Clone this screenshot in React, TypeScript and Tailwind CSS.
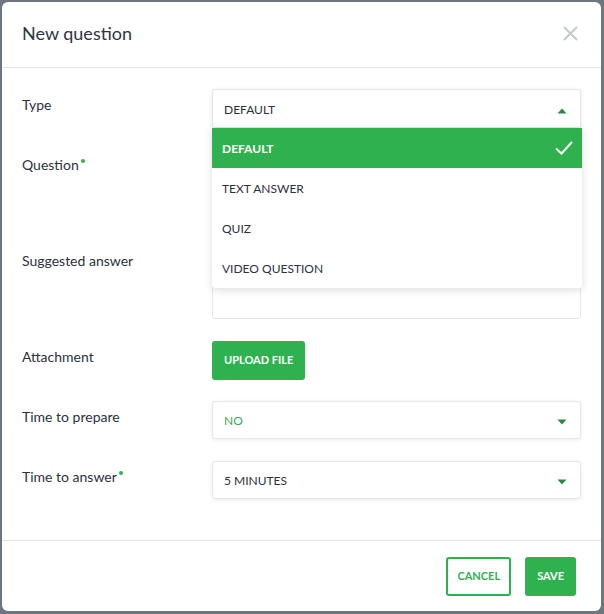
import type { ReactNode } from "react"

const green = "bg-[#30b150]"

function Caret({ up = false }: { up?: boolean }) {
  return (
    <svg className="mt-[2px]" width="10" height="6" viewBox="0 0 10 6" aria-hidden="true">
      {up ? <path d="M0.5 5.5 L5 0.5 L9.5 5.5 Z" fill="#288a40" /> : <path d="M0.5 0.5 L9.5 0.5 L5 5.5 Z" fill="#288a40" />}
    </svg>
  )
}

function Row({ label, required, children, className = "" }: { label: string; required?: boolean; children: ReactNode; className?: string }) {
  return (
    <div className={`flex ${className}`}>
      <div className="w-[190px] shrink-0 pt-[6px] text-[14px] leading-5 text-[#2b323a]">
        {label}
        {required && <span className="relative -top-[7px] ml-[2px] inline-block h-[4px] w-[4px] rounded-full bg-[#30b150]" />}
      </div>
      <div className="flex-1">{children}</div>
    </div>
  )
}

function Select({ value, green: isGreen }: { value: string; green?: boolean }) {
  return (
    <div className="flex h-[38px] items-center justify-between rounded-[3px] border border-[#e4e7ea] bg-white pl-[11px] pr-[13px] pt-[2px] shadow-[0_1px_4px_rgba(0,0,0,0.08)]">
      <span className={`text-[12px] ${isGreen ? "text-[#30b150]" : "text-[#2b323a]"}`}>{value}</span>
      <Caret />
    </div>
  )
}

export default function App() {
  return (
    <main className="min-h-screen bg-[#6e7780] pl-[2px] pt-[2px] font-['Lato',sans-serif]">
      <div className="flex h-[609px] w-[599px] flex-col rounded-[6px] bg-white">
        {/* Header */}
        <div className="flex h-[66px] shrink-0 items-start justify-between border-b border-[#e3e6e9] pl-5 pr-[23px] pt-[19px]">
          <h1 className="text-[18px] leading-6 text-[#2d3640]">New question</h1>
          <svg className="mt-[5px]" width="15" height="15" viewBox="0 0 15 15" aria-hidden="true">
            <path d="M1 1 L14 14 M14 1 L1 14" stroke="#c3c9ce" strokeWidth="2" />
          </svg>
        </div>

        {/* Body */}
        <div className="flex flex-1 flex-col px-5 pt-[21px]">
          <Row label="Type" className="relative z-10 mb-[21px]">
            <div className="relative">
              <div className="flex h-[39px] items-center justify-between rounded-[3px] border border-[#e4e7ea] bg-white pl-[11px] pr-[13px] pt-[2px] shadow-[0_1px_4px_rgba(0,0,0,0.1)]">
                <span className="text-[12px] text-[#2b323a]">DEFAULT</span>
                <Caret up />
              </div>
              <div className="absolute left-0 top-[39px] w-[370px] overflow-hidden rounded-b-[3px] bg-white shadow-[0_2px_8px_rgba(0,0,0,0.14)]">
                <div className={`flex h-[40px] items-center justify-between ${green} pl-[10px] pr-[8px] pt-[2px]`}>
                  <span className="text-[12px] font-bold text-white">DEFAULT</span>
                  <svg className="-mt-[2px]" width="20" height="16" viewBox="0 0 20 16" aria-hidden="true">
                    <path d="M2 8.5 L7.5 13.5 L18 2" stroke="#fff" strokeWidth="2" fill="none" />
                  </svg>
                </div>
                {["TEXT ANSWER", "QUIZ", "VIDEO QUESTION"].map((t) => (
                  <div key={t} className="flex h-[40px] items-center pl-[10px] pt-[2px] text-[12px] text-[#2b323a]">
                    {t}
                  </div>
                ))}
              </div>
            </div>
          </Row>

          <Row label="Question" required className="mb-[20px]">
            <div className="h-[76px] rounded-[3px] border border-[#e4e7ea]" />
          </Row>

          <Row label="Suggested answer" className="mb-[22px]">
            <div className="h-[74px] rounded-[3px] border border-[#e4e7ea]" />
          </Row>

          <Row label="Attachment" className="mb-[21px]">
            <button className={`h-[39px] rounded-[3px] ${green} px-[12px] text-[11px] font-bold text-white`}>UPLOAD FILE</button>
          </Row>

          <Row label="Time to prepare" className="mb-[22px]">
            <Select value="NO" green />
          </Row>

          <Row label="Time to answer" required>
            <Select value="5 MINUTES" />
          </Row>
        </div>

        {/* Footer */}
        <div className="flex h-[71px] shrink-0 items-center justify-end gap-[14px] border-t border-[#e3e6e9] pr-[25px]">
          <button className="h-[39px] rounded-[3px] border-2 border-[#30b150] px-[9px] text-[11px] font-bold text-[#30b150]">CANCEL</button>
          <button className={`h-[39px] rounded-[3px] ${green} px-[12px] text-[11px] font-bold text-white`}>SAVE</button>
        </div>
      </div>
    </main>
  )
}
